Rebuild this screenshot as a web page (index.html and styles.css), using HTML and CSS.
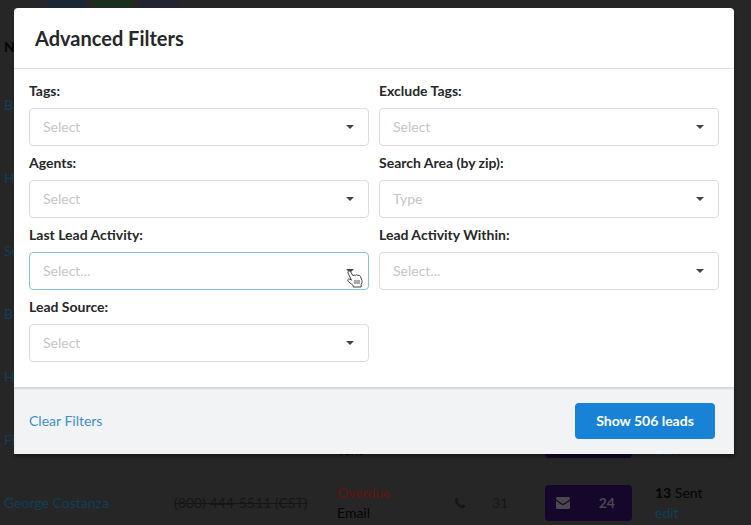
FILE: index.html
```html
<!DOCTYPE html>
<html lang="en">
<head>
    <meta charset="UTF-8">
    <meta name="viewport" content="width=device-width, initial-scale=1.0">
    <title>Advanced Filters</title>
    <link rel="stylesheet" href="styles.css">
</head>
<body>
    <div class="page">
        <div class="tabs">
            <span class="tab blue"></span>
            <span class="tab green"></span>
            <span class="tab violet"></span>
        </div>
        <table class="leads">
            <thead>
                <tr>
                    <th class="col-name">N</th>
                    <th class="col-phone"></th>
                    <th class="col-task"></th>
                    <th class="col-calls"></th>
                    <th class="col-mail"></th>
                    <th></th>
                </tr>
            </thead>
            <tbody>
                <tr><td><a href="#">B</a></td><td></td><td></td><td></td><td></td><td></td></tr>
                <tr class="tall"><td><a href="#">H</a></td><td></td><td></td><td></td><td></td><td></td></tr>
                <tr><td><a href="#">Su</a></td><td></td><td></td><td></td><td></td><td></td></tr>
                <tr><td><a href="#">B</a></td><td></td><td></td><td></td><td></td><td></td></tr>
                <tr><td><a href="#">H</a></td><td></td><td></td><td></td><td></td><td></td></tr>
                <tr>
                    <td><a href="#">Fi</a></td>
                    <td></td>
                    <td><span class="overdue">Overdue</span><br>Text</td>
                    <td></td>
                    <td><button class="mail" type="button"></button></td>
                    <td><br><a href="#">edit</a></td>
                </tr>
                <tr>
                    <td><a href="#">George Costanza</a></td>
                    <td><s>(800) 444-5511 (CST)</s></td>
                    <td><span class="overdue">Overdue</span><br>Email</td>
                    <td>
                        <div class="calls">
                            <svg width="12" height="12" viewBox="0 0 12 12"><path d="M1 2.2 2.8 .7 3.6 1 4.7 3.3 4.5 3.9 3.5 4.7Q4.8 7.2 7.3 8.5L8.1 7.5 8.7 7.3 11 8.4 11.3 9.2 9.8 11Q8.5 11.7 6.2 10.5 3 8.7 1.4 5.7.3 3.4 1 2.2Z"/></svg>
                            <span>31</span>
                        </div>
                    </td>
                    <td>
                        <button class="mail" type="button">
                            <svg width="14" height="12" viewBox="0 0 14 12"><path d="M0 1.3Q0 0 1.3 0H12.7Q14 0 14 1.3 14 2.3 12.8 3.2L8.3 6.3Q7 7.2 5.7 6.3L1.2 3.2Q0 2.3 0 1.3ZM0 3.8 5 7.3Q7 8.7 9 7.3L14 3.8V10.7Q14 12 12.7 12H1.3Q0 12 0 10.7Z"/></svg>
                            <span>24</span>
                        </button>
                    </td>
                    <td><b>13</b> Sent<br><a href="#">edit</a></td>
                </tr>
            </tbody>
        </table>
    </div>

    <form class="modal">
        <h1>Advanced Filters</h1>
        <div class="fields">
            <div class="field">
                <label for="tags">Tags:</label>
                <select id="tags"><option>Select</option></select>
            </div>
            <div class="field">
                <label for="exclude">Exclude Tags:</label>
                <select id="exclude"><option>Select</option></select>
            </div>
            <div class="field">
                <label for="agents">Agents:</label>
                <select id="agents"><option>Select</option></select>
            </div>
            <div class="field">
                <label for="area">Search Area (by zip):</label>
                <select id="area"><option>Type</option></select>
            </div>
            <div class="field active">
                <label for="activity">Last Lead Activity:</label>
                <select id="activity"><option>Select...</option></select>
                <svg class="pointer" width="16" height="18" viewBox="0 0 16 18"><path d="M1 1.8Q1.8 0 3.4 1.4L6 5.8Q7 4.5 8.3 5.3 9.8 4.2 10.8 5.4 12.6 4.7 13.3 6.3L15 10.5Q15.4 12.5 14.2 14.5V17H6.2V15.5L1.2 11.4Q-.2 9.6 1.5 9 3 8.8 4.5 10.2L1 3Z"/><path class="fold" d="M7 10h6v4H7z"/></svg>
            </div>
            <div class="field">
                <label for="within">Lead Activity Within:</label>
                <select id="within"><option>Select...</option></select>
            </div>
            <div class="field">
                <label for="source">Lead Source:</label>
                <select id="source"><option>Select</option></select>
            </div>
        </div>
        <div class="actions">
            <a href="#">Clear Filters</a>
            <button class="primary" type="button">Show 506 leads</button>
        </div>
    </form>
</body>
</html>
```

FILE: styles.css
```css
* {
    box-sizing: border-box;
}
body {
    margin: 0;
    height: 100vh;
    overflow: hidden;
    position: relative;
    background: #262626;
    color: #050505;
    font-family: Lato, sans-serif;
    font-size: 14px;
    line-height: 20px;
}
a {
    color: #113e5a;
    text-decoration: none;
}
button {
    border: 0;
    font: inherit;
    font-weight: bold;
}
.tabs {
    display: flex;
    gap: 7px;
    height: 21px;
    padding-left: 47px;
}
.tab {
    width: 39px;
    height: 8px;
}
.blue {
    background: #1a2836;
}
.green {
    background: #1a301e;
}
.violet {
    background: #232433;
}
.leads {
    width: 100%;
    table-layout: fixed;
    border-collapse: collapse;
}
.leads th, .leads td {
    padding: 0 0 0 4px;
    text-align: left;
}
.leads th {
    height: 52px;
}
.leads td {
    height: 63px;
}
.leads .tall td {
    height: 83px;
}
.col-name {
    width: 170px;
}
.col-phone {
    width: 163px;
}
.col-task {
    width: 117px;
}
.col-calls {
    width: 91px;
}
.col-mail {
    width: 110px;
}
.leads s {
    color: #151515;
}
.overdue {
    color: #641313;
}
.calls {
    display: flex;
    align-items: center;
    gap: 26px;
    color: #171717;
}
svg {
    fill: currentColor;
}
.mail {
    display: flex;
    align-items: center;
    justify-content: space-between;
    width: 87px;
    height: 36px;
    padding: 0 17px 0 11px;
    border-radius: 4px;
    background: #14072b;
    color: #4a484e;
}
.modal {
    position: absolute;
    top: 8px;
    left: 14px;
    right: 17px;
    background: #fff;
    border-radius: 4px 4px 0 0;
    box-shadow: 1px 3px 3px rgba(0, 0, 0, 0.3);
    color: #262728;
}
.modal h1 {
    margin: 0;
    padding: 15px 21px;
    border-bottom: 1px solid #dcdddd;
    font-size: 20px;
    line-height: 30px;
}
.fields {
    display: grid;
    grid-template-columns: 1fr 1fr;
    gap: 7px 10px;
    padding: 12px 15px 25px;
}
.field {
    position: relative;
}
.field label {
    display: block;
    margin-bottom: 7px;
    font-weight: bold;
}
.field select {
    display: block;
    width: 100%;
    height: 38px;
    padding: 0 13px;
    appearance: none;
    border: 1px solid #dcdddd;
    border-radius: 4px;
    background: #fff;
    color: #c5c5c5;
    font: inherit;
}
.field::after {
    content: "";
    position: absolute;
    right: 15px;
    bottom: 17px;
    border: 4px solid transparent;
    border-top-color: #444;
    border-bottom: 0;
}
.active select {
    border-color: #85c3d8;
}
.pointer {
    position: absolute;
    right: 6px;
    bottom: 2px;
    z-index: 1;
    fill: #fff;
    stroke: #444;
}
.fold {
    fill: #aaa;
    stroke: none;
}
.actions {
    display: flex;
    justify-content: space-between;
    align-items: center;
    padding: 16px 19px 15px 15px;
    background: #f2f3f5;
    box-shadow: inset 0 2px 2px rgba(0, 0, 0, 0.13);
}
.actions a {
    color: #3f91c4;
}
.primary {
    height: 36px;
    width: 140px;
    border-radius: 4px;
    background: #1882d6;
    color: #fff;
}
```
